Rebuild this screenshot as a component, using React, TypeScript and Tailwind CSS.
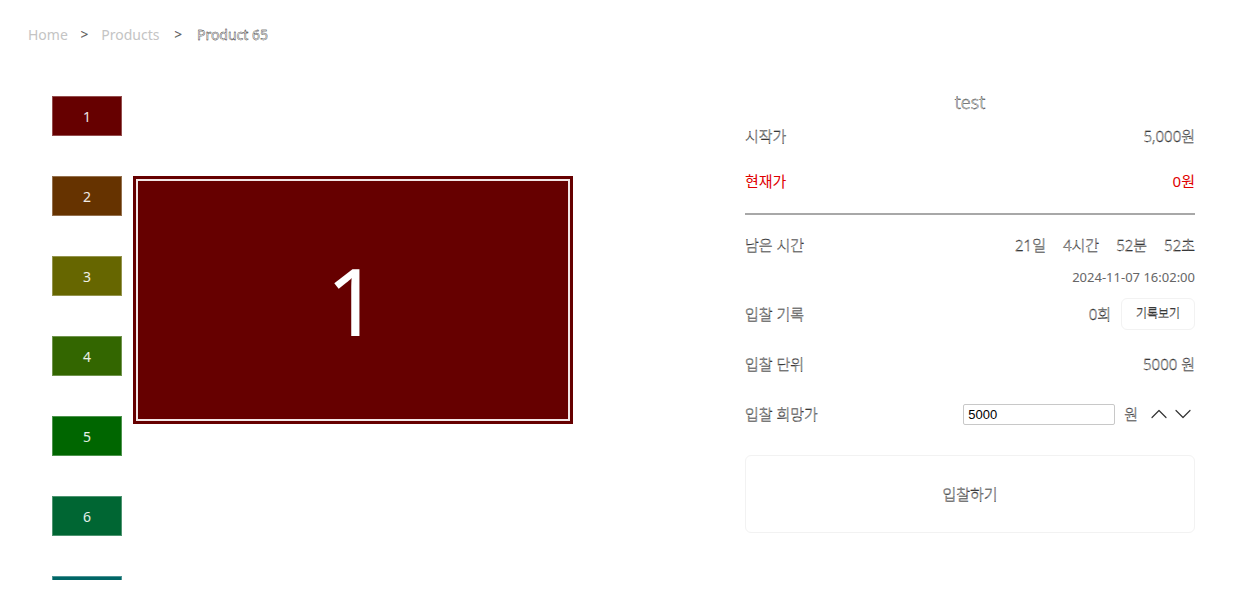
import React from "react";

const outline = "text-white font-light [-webkit-text-stroke:0.35px_#000]";

const thumbs = [
  { n: 1, c: "bg-[#660000]" },
  { n: 2, c: "bg-[#663300]" },
  { n: 3, c: "bg-[#666600]" },
  { n: 4, c: "bg-[#336600]" },
  { n: 5, c: "bg-[#006600]" },
  { n: 6, c: "bg-[#006633]" },
  { n: 7, c: "bg-[#006666]" },
];

function Row({ label, children, className = "" }: { label: React.ReactNode; children: React.ReactNode; className?: string }) {
  return (
    <div className={"flex items-center justify-between " + className}>
      <span>{label}</span>
      <div className="flex items-center">{children}</div>
    </div>
  );
}

function Chevron({ up }: { up?: boolean }) {
  return (
    <svg width="16" height="10" viewBox="0 0 16 10" fill="none" stroke="#333" strokeWidth="1.2" strokeLinecap="round" strokeLinejoin="round">
      {up ? <path d="M1 8.5 L8 1.5 L15 8.5" /> : <path d="M1 1.5 L8 8.5 L15 1.5" />}
    </svg>
  );
}

export default function App() {
  return (
    <div
      className="w-[1238px] h-[604px] bg-white overflow-hidden px-[28px]"
      style={{ fontFamily: '"Noto Sans", "Noto Sans CJK KR", sans-serif' }}
    >
      {/* breadcrumb */}
      <div className="h-[70px] flex items-center gap-[13px] text-[14px] leading-none pb-[1px]">
        <span className="text-[#c4c4c4]">Home</span>
        <span className={outline + " text-[13px]"}>&gt;</span>
        <span className="text-[#c4c4c4]">Products</span>
        <span className={outline + " text-[13px] ml-[2px]"}>&gt;</span>
        <span className="text-white font-normal [-webkit-text-stroke:0.35px_#000] ml-[2px]">Product 65</span>
      </div>

      <div className="flex">
        {/* thumbnails */}
        <div className="ml-[24px] mt-[26px] h-[484px] overflow-hidden flex flex-col gap-[40px] w-[70px] shrink-0">
          {thumbs.map((t) => (
            <div
              key={t.n}
              className={`${t.c} h-[40px] w-[70px] shrink-0 border border-white/30 flex items-center justify-center text-white/90 text-[14px]`}
            >
              {t.n}
            </div>
          ))}
        </div>

        {/* main image */}
        <div className="ml-[11px] mt-[106px] w-[440px] h-[248px] bg-[#660000] p-[3px] shrink-0">
          <div className="w-full h-full border-2 border-[#f3e6e6] flex items-center justify-center">
            <span className="text-white text-[94px] leading-none">1</span>
          </div>
        </div>

        {/* right panel */}
        <div className="ml-[172px] mt-[18px] w-[450px] shrink-0 text-[15px]">
          <div className={"h-[28px] flex items-center justify-center text-[18px] " + outline}>test</div>
          <Row label={<span className={outline}>시작가</span>} className="h-[45px] mt-[-2px]">
            <span className={outline}>5,000원</span>
          </Row>
          <Row label={<span className="text-[#e00000]">현재가</span>} className="h-[45px]">
            <span className="text-[#e00000]">0원</span>
          </Row>
          <div className="mt-[9px] h-[2px] bg-[#a8a8a8]" />
          <Row label={<span className={outline}>남은 시간</span>} className="h-[40px] mt-[10px]">
            <div className={"flex gap-[17px] " + outline}>
              <span>21일</span>
              <span>4시간</span>
              <span>52분</span>
              <span>52초</span>
            </div>
          </Row>
          <div className="h-[24px] pt-[2px] flex items-center justify-end text-[13px] text-[#666]">2024-11-07 16:02:00</div>
          <Row label={<span className={outline}>입찰 기록</span>} className="h-[50px]">
            <span className={outline}>0회</span>
            <button className="ml-[10px] w-[74px] h-[32px] rounded-md border border-[#f2f2f2] flex items-center justify-center text-[12px]">
              <span className={outline}>기록보기</span>
            </button>
          </Row>
          <Row label={<span className={outline}>입찰 단위</span>} className="h-[50px]">
            <span className={outline}>5000 원</span>
          </Row>
          <Row label={<span className={outline}>입찰 희망가</span>} className="h-[50px]">
            <input
              defaultValue="5000"
              className="w-[152px] h-[21px] border border-[#c8c8c8] rounded-[2px] px-[4px] text-[13px] text-black outline-none"
              style={{ fontFamily: '"Liberation Sans", Arial, sans-serif' }}
            />
            <span className={"ml-[9px] " + outline}>원</span>
            <div className="ml-[13px] flex items-center gap-[8px] mr-[4px]">
              <Chevron up />
              <Chevron />
            </div>
          </Row>
          <button className="mt-[16px] w-full h-[78px] rounded-md border border-[#f2f2f2] flex items-center justify-center text-[15px]">
            <span className={outline}>입찰하기</span>
          </button>
        </div>
      </div>
    </div>
  );
}
